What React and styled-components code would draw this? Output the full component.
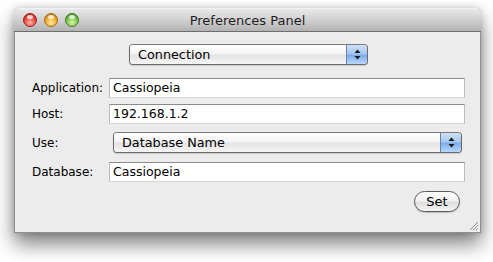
import React from "react";
import styled, { createGlobalStyle } from "styled-components";

const Global = createGlobalStyle`
  html, body { margin: 0; padding: 0; background: #ffffff; }
  body { font-family: "Lucida Grande", "DejaVu Sans", sans-serif; font-size: 12px; color: #000; }
`;

const Page = styled.div`
  width: 493px;
  height: 262px;
  padding: 8px 0 0 14px;
  box-sizing: border-box;
`;

const Window = styled.div`
  position: relative;
  width: 467px;
  height: 225px;
  box-sizing: border-box;
  background: #ececec;
  border: 1px solid #8f8f8f;
  border-top: none;
  border-radius: 5px 5px 0 0;
  box-shadow: 0 11px 20px rgba(0, 0, 0, 0.5), 0 0 7px rgba(0, 0, 0, 0.18);
  display: flex;
  flex-direction: column;
`;

const TitleBar = styled.div`
  height: 22px;
  margin: 0 -1px;
  border-radius: 5px 5px 0 0;
  background: linear-gradient(#e8e8e8, #d0d0d0 50%, #b2b2b2);
  border-bottom: 1px solid #6e6e6e;
  border-top: 1px solid #f2f2f2;
  display: flex;
  align-items: center;
  position: relative;
`;

const Lights = styled.div`
  display: flex;
  gap: 7px;
  padding-left: 9px;
`;

const colors = {
  red: ["#ffb3ad", "#e2453c", "#a01c14"],
  yellow: ["#ffe9a0", "#eea828", "#a46810"],
  green: ["#d6f5a6", "#78c24a", "#3c7a1a"],
};

const Light = styled.span`
  width: 14px;
  height: 14px;
  border-radius: 50%;
  box-sizing: border-box;
  border: 1px solid ${(p) => colors[p.$c][2]};
  background: radial-gradient(circle at 50% 72%, ${(p) => colors[p.$c][0]} 0%, ${(p) => colors[p.$c][1]} 55%, ${(p) => colors[p.$c][2]} 100%);
  position: relative;
  &::after {
    content: "";
    position: absolute;
    left: 3px;
    top: 1px;
    width: 6px;
    height: 4px;
    border-radius: 50%;
    background: rgba(255, 255, 255, 0.75);
  }
`;

const Title = styled.div`
  position: absolute;
  left: 0;
  right: 0;
  text-align: center;
  font-size: 13px;
  color: #1e1e1e;
  pointer-events: none;
`;

const Content = styled.div`
  flex: 1;
  display: flex;
  flex-direction: column;
  padding: 12px 15px 0 17px;
`;

const CenterRow = styled.div`
  display: flex;
  justify-content: center;
`;

const Row = styled.div`
  display: flex;
  align-items: center;
  margin-top: ${(p) => p.$mt}px;
`;

const Label = styled.div`
  width: 77px;
  font-size: 12px;
`;

const Field = styled.div`
  flex: 1;
  height: 20px;
  box-sizing: border-box;
  background: #fff;
  border: 1px solid #bdbdbd;
  border-top-color: #8a8a8a;
  border-bottom-color: #d8d8d8;
  padding: 0 3px;
  font-size: 12.5px;
  line-height: 18px;
`;

const Popup = styled.div`
  display: flex;
  width: ${(p) => p.$w}px;
  height: 21px;
  box-sizing: border-box;
  border: 1px solid #6a6a6a;
  border-top-color: #7a7a7a;
  border-radius: 4px;
  overflow: hidden;
  margin-left: ${(p) => p.$ml || 0}px;
  box-shadow: 0 1px 1px rgba(0, 0, 0, 0.15);
`;

const PopupText = styled.div`
  flex: 1;
  padding-left: 8px;
  font-size: 12.8px;
  line-height: 19px;
  background: linear-gradient(#ffffff, #f4f4f4 45%, #e3e3e3 55%, #f6f6f6);
`;

const PopupArrows = styled.div`
  width: 20px;
  border-left: 1px solid #6b7fa8;
  background: linear-gradient(#cfe0f7, #a8c8f0 45%, #7fadea 55%, #b8d8fb);
  display: flex;
  align-items: center;
  justify-content: center;
`;

const ButtonRow = styled.div`
  display: flex;
  justify-content: flex-end;
  margin-top: 9px;
  padding-right: 5px;
`;

const Button = styled.button`
  width: 46px;
  height: 21px;
  box-sizing: border-box;
  border: 1px solid #5a5a5a;
  border-radius: 11px;
  background: linear-gradient(#ffffff, #f2f2f2 45%, #dedede 55%, #f4f4f4);
  font-family: inherit;
  font-size: 13px;
  padding: 0 0 1px;
  color: #000;
  box-shadow: 0 1px 1px rgba(0, 0, 0, 0.2);
`;

const Grip = styled.svg`
  position: absolute;
  right: 1px;
  bottom: 1px;
`;

function Arrows() {
  return (
    <svg width="7" height="11" viewBox="0 0 7 11">
      <path d="M3.5 0.5 L6.5 4 L0.5 4 Z" fill="#1a1a1a" />
      <path d="M0.5 7 L6.5 7 L3.5 10.5 Z" fill="#1a1a1a" />
    </svg>
  );
}

export default function App() {
  return (
    <Page>
      <Global />
      <Window>
        <TitleBar>
          <Lights>
            <Light $c="red" />
            <Light $c="yellow" />
            <Light $c="green" />
          </Lights>
          <Title>Preferences Panel</Title>
        </TitleBar>
        <Content>
          <CenterRow>
            <Popup $w={239}>
              <PopupText>Connection</PopupText>
              <PopupArrows>
                <Arrows />
              </PopupArrows>
            </Popup>
          </CenterRow>
          <Row $mt={13}>
            <Label>Application:</Label>
            <Field>Cassiopeia</Field>
          </Row>
          <Row $mt={6}>
            <Label>Host:</Label>
            <Field>192.168.1.2</Field>
          </Row>
          <Row $mt={8}>
            <Label>Use:</Label>
            <Popup $w={349} $ml={4}>
              <PopupText>Database Name</PopupText>
              <PopupArrows>
                <Arrows />
              </PopupArrows>
            </Popup>
          </Row>
          <Row $mt={9}>
            <Label>Database:</Label>
            <Field>Cassiopeia</Field>
          </Row>
          <ButtonRow>
            <Button>Set</Button>
          </ButtonRow>
        </Content>
        <Grip width="11" height="11" viewBox="0 0 11 11">
          <path d="M10 2 L2 10 M10 5 L5 10 M10 8 L8 10" stroke="#8a8a8a" strokeWidth="1" />
          <path d="M10.8 2.8 L2.8 10.8 M10.8 5.8 L5.8 10.8 M10.8 8.8 L8.8 10.8" stroke="#ffffff" strokeWidth="0.8" />
        </Grip>
      </Window>
    </Page>
  );
}
